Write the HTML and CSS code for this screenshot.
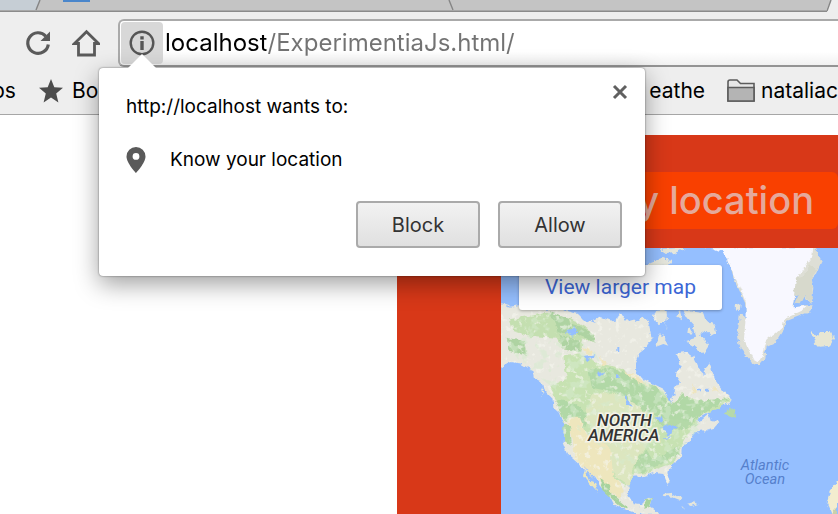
FILE: index.html
```html
<!DOCTYPE html>
<html lang="en">
<head>
<meta charset="utf-8">
<meta name="viewport" content="width=device-width, initial-scale=1">
<title>ExperimentiaJs</title>
<link rel="stylesheet" href="styles.css">
</head>
<body>
<header class="chrome">
  <svg class="tabs" viewBox="0 0 838 12" preserveAspectRatio="none" aria-hidden="true">
    <path d="M0 0H838V12H0Z" fill="#eeeeee"/>
    <path d="M0 0H831L826 11H0Z" fill="#c4c4c4"/>
    <path d="M0 0H40L36 10H0Z" fill="#c6ced5"/>
    <path d="M63 0h27v2H63Z" fill="#4a86cb"/>
    <path d="M40 0L36 10M449 0l4 10M831 0l-4 11" fill="none" stroke="#858585" stroke-width="1.4"/>
    <path d="M0 11.2H827" stroke="#8b8b8b" stroke-width="1.4"/>
  </svg>
  <div class="toolbar">
    <button class="tool" type="button" aria-label="Reload">
      <svg width="28" height="28" viewBox="0 0 28 28"><path d="M24.3 15.5A10.300 10.300 0 1 1 21.800 7.2" fill="none" stroke="#5a5a5a" stroke-width="3.2"/><path d="M26 2.5V12H16.5Z" fill="#5a5a5a"/></svg>
    </button>
    <button class="tool" type="button" aria-label="Home">
      <svg width="28" height="28" viewBox="0 0 28 28"><path d="M2.500 14.5L14.500 2.8 26.500 14.5H22.500V26H6.500V14.5Z" fill="none" stroke="#5a5a5a" stroke-width="2.8"/></svg>
    </button>
    <div class="omnibox">
      <button class="site-info" type="button" aria-label="View site information">
        <svg width="26" height="26" viewBox="0 0 26 26"><circle cx="13" cy="13" r="11.3" fill="none" stroke="#555" stroke-width="2.4"/><path d="M11.3 6.2h3.400v3.200h-3.400zM11.3 11h3.400v9h-3.400z" fill="#555"/></svg>
      </button>
      <input class="address" type="text" aria-label="Address" value="localhost/ExperimentiaJs.html/">
    </div>
  </div>
  <nav class="bookmarks" aria-label="Bookmarks">
    <a class="bookmark apps" href="#">ps</a>
    <a class="bookmark" href="#"><svg width="26" height="26" viewBox="0 0 26 26"><path d="M13 1L16.3 9.2 25 9.8 18.2 15.4 20.4 24.5 13 19.6 5.6 24.5 7.8 15.4 1 9.8 9.7 9.2Z" fill="#4c4c4c"/></svg>Bo</a>
    <a class="bookmark trailing" href="#">eathe</a>
    <a class="bookmark folder" href="#"><svg width="28" height="24" viewBox="0 0 28 24"><path d="M1 22V3Q1 1 3 1H10L13.5 4.5H27V22Z" fill="#e6e6e6" stroke="#5c5c5c" stroke-width="1.6"/><path d="M1 8.5H27V22H1Z" fill="#b4b4b4" stroke="#5c5c5c" stroke-width="1.6"/></svg>nataliac</a>
  </nav>
</header>

<main class="page">
  <section class="panel">
    <h1 class="banner">y location</h1>
    <div class="map">
      <svg class="map-art" viewBox="3 6 1011 798" preserveAspectRatio="xMinYMin slice" role="img" aria-label="Map of North America">
        <defs>
          <filter id="rough" x="-5%" y="-5%" width="110%" height="110%"><feTurbulence type="fractalNoise" baseFrequency="0.05" numOctaves="3" seed="4"/><feDisplacementMap in="SourceGraphic" scale="18" xChannelSelector="R" yChannelSelector="G"/></filter>
          <filter id="speckle" x="0" y="0" width="100%" height="100%"><feTurbulence type="fractalNoise" baseFrequency="0.055" numOctaves="3" seed="9"/><feColorMatrix values="0 0 0 0 .92  0 0 0 0 .92  0 0 0 0 .86  7 0 0 0 -4.1"/><feComposite in2="SourceGraphic" operator="in"/></filter>
          <filter id="forest" x="0" y="0" width="100%" height="100%"><feTurbulence type="fractalNoise" baseFrequency="0.035" numOctaves="3" seed="21"/><feColorMatrix values="0 0 0 0 .67  0 0 0 0 .83  0 0 0 0 .62  0 9 0 0 -4.9"/><feComposite in2="SourceGraphic" operator="in"/></filter>
          <path id="continent" d="M0 172L30 182 60 178 110 192 180 190 235 205 262 232 300 212 345 228 360 200 385 226 430 212 450 232 465 196 500 205 498 250 472 262 450 285 440 304 418 322 404 350 406 378 430 398 470 420 495 432 512 474 524 440 520 430 540 405 526 385 542 360 530 322 560 318 580 335 592 365 612 385 628 352 640 385 652 410 668 432 692 455 680 475 650 482 625 500 602 514 572 530 605 522 626 505 632 525 658 528 640 548 615 556 582 560 568 585 546 605 542 635 515 655 502 680 512 712 504 716 490 684 460 680 430 690 395 692 382 712 385 745 400 775 425 778 435 758 460 752 450 785 475 800 480 806 430 806 400 798 340 775 328 750 300 720 278 685 255 675 232 650 200 622 188 590 192 535 180 500 160 482 158 458 135 435 120 405 105 398 100 374 60 352 25 348 0 362Z"/>
        </defs>
        <path d="M0 0H1014V804H0Z" fill="#95bfff"/>
        <g filter="url(#rough)">
          <use href="#continent" fill="#e8e8df"/>
          <path d="M30 220L140 200 210 215 270 250 288 288 250 282 240 318 190 310 170 275 90 270 40 255Z" fill="#c4dfb0"/>
          <path d="M150 195L205 215 215 255 175 265ZM175 268L240 285 238 318 190 310ZM210 232L265 250 290 290 240 270ZM20 275L72 285 80 330 30 315Z" fill="#aed3a2"/>
          <path d="M190 330L240 325 290 350 360 365 400 395 495 440 515 475 545 445 610 468 690 455 670 480 600 510 575 545 545 600 520 650 440 682 400 684 375 720 330 690 300 600 240 540 195 520 165 455 150 420 200 400Z" fill="#c7e2b2"/>
          <path d="M265 370L350 370 400 398 465 420 510 475 550 445 585 465 650 460 688 458 640 482 560 540 500 520 440 500 350 440 275 425ZM165 460L225 470 268 510 255 545 190 520ZM190 525L212 545 215 600 190 585Z" fill="#b1d8a6"/>
          <path d="M400 655L440 610 460 640 535 600 540 625 480 655 430 680ZM470 525L530 520 590 535 510 560Z" fill="#b4d9a8"/>
          <path d="M270 445L350 440 420 480 445 590 400 660 385 720 345 690 300 600 255 520Z" fill="#dce6bf"/>
          <path d="M205 515L240 515 260 565 330 600 340 690 375 735 355 760 310 715 270 680 225 640 218 580Z" fill="#eee6bd"/>
          <path d="M300 690L330 720 335 745 385 785 360 780 310 735ZM435 760L460 752 450 782 430 790Z" fill="#a8d39e"/>
          <path d="M255 672L275 688 288 728 293 738 270 712 252 688Z" fill="#ebe6bd"/>
          <path d="M245 300L280 318 270 326 248 314ZM300 330L320 350 304 360ZM372 380L400 385 460 425 430 418ZM640 420L660 440 640 436ZM577 415L588 438 578 445Z" fill="#efe5bd"/>
        </g>
        <use href="#continent" fill="#fff" filter="url(#speckle)" opacity=".6"/>
        <path d="M155 195L260 260 300 350 490 430 520 480 680 460 550 600 520 650 400 685 300 600 190 520 165 430 60 350 10 270 60 220Z" fill="#fff" filter="url(#forest)" opacity=".5"/>
        <g fill="#95bfff" filter="url(#rough)">
          <path d="M195 255L215 252 222 240 238 256 215 275ZM248 330L290 325 262 345ZM292 380L315 378 298 392ZM372 445L385 460 398 482 380 475ZM348 385h8v14h-8zM465 520L482 510 490 530ZM480 545L508 534 535 545 515 552 505 572 496 552ZM490 578L515 570 500 582ZM252 660L262 672 285 708 270 704ZM620 425h10v12h-10zM588 428h12v8h-12zM352 306h6v12h-6z"/>
          <path d="M250 200L280 218 290 234 250 220ZM315 190L350 230 330 215ZM390 196L405 228 430 214ZM456 205L466 230 480 236 500 225 495 265 455 275 448 240Z"/>
        </g>
        <g fill="#e5e6dc" filter="url(#rough)">
          <path d="M478 262L500 285 508 300 490 294 468 302ZM547 192L610 202 618 228 645 240 648 260 632 270 615 254 600 264 628 296 610 325 580 300 556 285 588 275 582 240 560 215ZM565 244L576 248 573 266 562 260ZM452 48L485 36 516 42 508 56 440 58ZM480 8L555 6 520 22 500 24ZM465 195L500 192 500 220 475 238ZM540 195L546 220 530 210Z"/>
          <path d="M704 178L722 172 720 192 705 190Z"/>
          <path d="M600 4L662 8 682 40 695 85 712 120 735 170 740 220 720 205 712 260 722 310 750 345 778 357 792 340 800 300 830 286 852 250 858 226 925 200 935 178 915 178 880 186 890 120 930 80 940 125 935 170 915 160 920 110 945 90 965 45 945 6Z" fill="#dedfd6"/>
          <path d="M936 258L952 272 960 258 992 258 1002 278 985 300 960 302 940 292 950 280 934 268Z" fill="#e7e6d3"/>
          <path d="M672 506L688 482 694 493 708 495 712 518 695 514Z" fill="#b6d9ab"/>
          <path d="M486 744L515 740 550 760 545 764 515 752 490 750ZM562 770L580 766 596 775 570 780ZM123 430L132 438 128 450ZM540 782L560 790 544 786Z"/>
          <path d="M1014 702L1000 718 985 755 980 775 995 808H1014Z" fill="#f3edcf"/>
          <path d="M1000 795L1014 780V808H996Z" fill="#c9cfab"/>
        </g>
        <path d="M635 4L662 15 682 40 697 82 718 122 738 170 736 230 732 282 758 338 776 349 786 330 792 300 800 280 825 265 848 242 852 220 910 192 922 180 880 184 895 90 936 34 940 4Z" fill="#f8f8ff" filter="url(#rough)"/>
        <path d="M888 95L912 88 930 55 948 70 935 98 938 160 926 170 916 145 902 172 886 170 896 145 882 150Z" fill="#d7d9cc" filter="url(#rough)"/>
        <g class="land-label"><text x="373" y="539">NORTH</text><text x="371" y="585">AMERICA</text></g>
        <g class="sea-label"><text x="795" y="673">Atlantic</text><text x="795" y="715">Ocean</text></g>
      </svg>
      <a class="larger" href="#">View larger map</a>
    </div>
  </section>
</main>

<section class="prompt" role="dialog" aria-labelledby="prompt-title">
  <div class="prompt-head">
    <h2 id="prompt-title">http://localhost wants to:</h2>
    <button class="close" type="button" aria-label="Close"><svg width="16" height="16" viewBox="0 0 16 16"><path d="M2 2L14 14M14 2L2 14" stroke="#606060" stroke-width="3"/></svg></button>
  </div>
  <p class="permission"><svg width="20" height="26" viewBox="0 0 20 26"><path fill-rule="evenodd" d="M10 0A9.5 9.5 0 0 0 .5 9.5C.5 16 10 26 10 26S19.5 16 19.5 9.5A9.5 9.5 0 0 0 10 0ZM10 6A3.4 3.4 0 1 1 10 12.800A3.4 3.4 0 0 1 10 6Z" fill="#5a5a5a"/></svg>Know your location</p>
  <div class="actions">
    <button class="choice" type="button">Block</button>
    <button class="choice" type="button">Allow</button>
  </div>
</section>
</body>
</html>
```
FILE: styles.css
```css
* { box-sizing: border-box; }

body {
  margin: 0;
  min-height: 100vh;
  display: flex;
  flex-direction: column;
  overflow: hidden;
  background: #fff;
  color: #000;
  font: 20px/24px Inter, Roboto, sans-serif;
}

button { font: inherit; color: inherit; cursor: pointer; }
svg { display: block; flex: none; }

.chrome { background: #eee; border-bottom: 1px solid #a6a6a6; }
.tabs { width: 100%; height: 12px; }

.toolbar {
  display: flex;
  align-items: center;
  gap: 20px;
  padding: 7px 0 0 24px;
}
.tool { padding: 0; border: 0; background: none; }

.omnibox {
  flex: 1;
  display: flex;
  align-items: center;
  gap: 2px;
  height: 48px;
  margin-left: -2px;
  padding: 2px 2px 2px 1px;
  border: 2px solid #aaa;
  border-bottom-color: #949494;
  border-right: 0;
  border-radius: 6px 0 0 6px;
  background: linear-gradient(#fff 70%, #f1f1f1);
}
.site-info {
  display: flex;
  align-items: center;
  justify-content: center;
  width: 42px;
  height: 42px;
  padding: 0;
  border: 0;
  border-radius: 4px;
  background: #d8d8d8;
}
.address {
  flex: 1;
  min-width: 0;
  padding: 0;
  border: 0;
  outline: 0;
  font: 24px/32px Inter, Roboto, sans-serif;
  color: transparent;
  background: linear-gradient(90deg, #000 101px, #737373 101px);
  background-clip: text;
}

.bookmarks {
  display: flex;
  align-items: center;
  gap: 22px;
  height: 47px;
  overflow: hidden;
}
.bookmark {
  display: flex;
  align-items: center;
  gap: 8px;
  color: #000;
  font-size: 21px;
  text-decoration: none;
}
.apps { margin-left: -8px; }
.trailing { margin-left: auto; }
.folder { gap: 6px; }

.page {
  flex: 1;
  display: flex;
  padding: 20px 0 0 397px;
}
.panel {
  flex: 1;
  display: flex;
  flex-direction: column;
  padding-top: 37px;
  background: #d83818;
}
.banner {
  margin: 0 0 19px 104px;
  padding: 0 24px 0 0;
  border-radius: 0 6px 6px 0;
  background: #f94000;
  color: #e5a99b;
  font-size: 38px;
  line-height: 57px;
  font-weight: 500;
  text-align: right;
}
.map { position: relative; flex: 1; margin-left: 104px; background: #95bfff; }
.map-art { position: absolute; width: 100%; height: 100%; }
.land-label, .sea-label { font-family: Roboto, sans-serif; font-style: italic; text-anchor: middle; }
.land-label { font-size: 51px; font-weight: 500; fill: #333; stroke: #f4f3e9; stroke-width: 9px; paint-order: stroke; }
.sea-label { font-size: 44px; fill: #557fcc; }
.larger {
  position: absolute;
  top: 17px;
  left: 18px;
  padding: 6px 26px 7px;
  border-radius: 3px;
  background: #fff;
  box-shadow: 0 1px 3px rgba(0, 0, 0, .3);
  color: #3d67d6;
  font: 21px/32px Roboto, sans-serif;
  text-decoration: none;
}

.prompt {
  position: absolute;
  top: 68px;
  left: 99px;
  width: 546px;
  padding: 16px 23px 28px 27px;
  border-radius: 4px;
  background: #fff;
  box-shadow: 0 0 2px rgba(0, 0, 0, .55), 0 8px 24px rgba(0, 0, 0, .38);
}
.prompt::before {
  content: "";
  position: absolute;
  top: -14px;
  left: 29px;
  border: 14px solid transparent;
  border-top: 0;
  border-bottom-color: #fff;
}
.prompt-head { display: flex; justify-content: space-between; align-items: flex-start; }
.prompt-head h2 { margin: 11px 0 0; font-size: 19px; line-height: 24px; font-weight: 400; }
.close { padding: 0; border: 0; background: none; margin-right: -6px; }
.permission {
  display: flex;
  align-items: center;
  gap: 24px;
  margin: 28px 0;
  font-size: 19px;
}
.actions { display: flex; justify-content: flex-end; gap: 18px; }
.choice {
  width: 124px;
  height: 47px;
  padding: 0;
  border: 2px solid #aaa;
  border-radius: 4px;
  background: linear-gradient(#f2f2f2, #e0e0e0);
  color: #333;
}
```
